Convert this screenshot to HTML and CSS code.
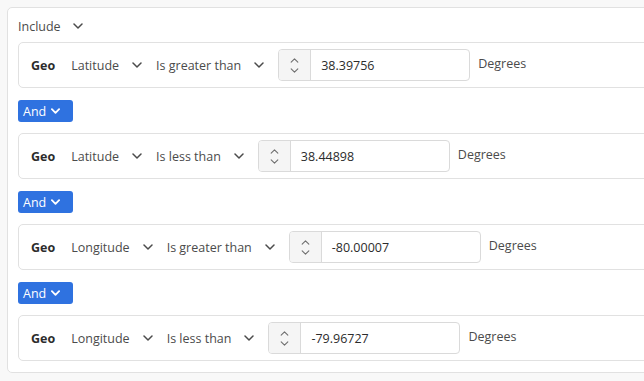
FILE: index.html
```html
<!DOCTYPE html>
<html lang="en">
<head>
    <meta charset="UTF-8">
    <meta name="viewport" content="width=device-width, initial-scale=1.0">
    <title>Geo Filter</title>
    <link rel="stylesheet" href="styles.css">
</head>
<body>
    <div class="panel">
        <div class="include">
            <span>Include</span>
            <svg class="chev" viewBox="0 0 10 6"><path d="M1 1l4 4 4-4"/></svg>
        </div>

        <div class="rule">
            <span class="geo">Geo</span>
            <span class="dd">Latitude <svg class="chev" viewBox="0 0 10 6"><path d="M1 1l4 4 4-4"/></svg></span>
            <span class="dd">Is greater than <svg class="chev" viewBox="0 0 10 6"><path d="M1 1l4 4 4-4"/></svg></span>
            <div class="num">
                <div class="step">
                    <svg viewBox="0 0 10 6"><path d="M1 5l4-4 4 4"/></svg>
                    <svg viewBox="0 0 10 6"><path d="M1 1l4 4 4-4"/></svg>
                </div>
                <span class="val">38.39756</span>
            </div>
            <span class="unit">Degrees</span>
        </div>

        <button class="and">And <svg viewBox="0 0 10 6"><path d="M1 1l4 4 4-4"/></svg></button>

        <div class="rule">
            <span class="geo">Geo</span>
            <span class="dd">Latitude <svg class="chev" viewBox="0 0 10 6"><path d="M1 1l4 4 4-4"/></svg></span>
            <span class="dd">Is less than <svg class="chev" viewBox="0 0 10 6"><path d="M1 1l4 4 4-4"/></svg></span>
            <div class="num">
                <div class="step">
                    <svg viewBox="0 0 10 6"><path d="M1 5l4-4 4 4"/></svg>
                    <svg viewBox="0 0 10 6"><path d="M1 1l4 4 4-4"/></svg>
                </div>
                <span class="val">38.44898</span>
            </div>
            <span class="unit">Degrees</span>
        </div>

        <button class="and">And <svg viewBox="0 0 10 6"><path d="M1 1l4 4 4-4"/></svg></button>

        <div class="rule">
            <span class="geo">Geo</span>
            <span class="dd">Longitude <svg class="chev" viewBox="0 0 10 6"><path d="M1 1l4 4 4-4"/></svg></span>
            <span class="dd">Is greater than <svg class="chev" viewBox="0 0 10 6"><path d="M1 1l4 4 4-4"/></svg></span>
            <div class="num">
                <div class="step">
                    <svg viewBox="0 0 10 6"><path d="M1 5l4-4 4 4"/></svg>
                    <svg viewBox="0 0 10 6"><path d="M1 1l4 4 4-4"/></svg>
                </div>
                <span class="val">-80.00007</span>
            </div>
            <span class="unit">Degrees</span>
        </div>

        <button class="and">And <svg viewBox="0 0 10 6"><path d="M1 1l4 4 4-4"/></svg></button>

        <div class="rule">
            <span class="geo">Geo</span>
            <span class="dd">Longitude <svg class="chev" viewBox="0 0 10 6"><path d="M1 1l4 4 4-4"/></svg></span>
            <span class="dd">Is less than <svg class="chev" viewBox="0 0 10 6"><path d="M1 1l4 4 4-4"/></svg></span>
            <div class="num">
                <div class="step">
                    <svg viewBox="0 0 10 6"><path d="M1 5l4-4 4 4"/></svg>
                    <svg viewBox="0 0 10 6"><path d="M1 1l4 4 4-4"/></svg>
                </div>
                <span class="val">-79.96727</span>
            </div>
            <span class="unit">Degrees</span>
        </div>
    </div>
</body>
</html>
```

FILE: styles.css
```css
* {
    margin: 0;
    padding: 0;
    box-sizing: border-box;
    font-family: 'Open Sans', 'Noto Sans', sans-serif;
}

body {
    background-color: #f8f8f8;
    overflow: hidden;
    color: #4b4b4b;
    font-size: 12.5px;
}

.panel {
    margin: 7px 0 0 7px;
    width: 660px;
    height: 366px;
    background-color: #fff;
    border: 1px solid #e1e1e1;
    border-radius: 5px;
    padding: 8px 0 0 10px;
}

.include {
    display: flex;
    align-items: center;
    gap: 12px;
    height: 20px;
    margin-bottom: 6px;
}

svg {
    fill: none;
    stroke: currentColor;
    stroke-width: 1.5;
    stroke-linecap: round;
    stroke-linejoin: round;
}

.chev {
    width: 10px;
    height: 6px;
}

.rule {
    display: flex;
    align-items: center;
    height: 46px;
    border: 1px solid #e1e1e1;
    border-radius: 5px;
    padding-left: 12px;
}

.geo {
    font-weight: 700;
    color: #2c2c2c;
    margin-right: 16px;
}

.dd {
    display: flex;
    align-items: center;
    gap: 13px;
    margin-right: 14px;
}

.num {
    display: flex;
    width: 192px;
    height: 32px;
    border: 1px solid #dadada;
    border-radius: 4px;
    overflow: hidden;
}

.step {
    width: 32px;
    background-color: #f5f5f5;
    border-right: 1px solid #dadada;
    display: flex;
    flex-direction: column;
    align-items: center;
    justify-content: center;
    gap: 5px;
    color: #6e6e6e;
}

.step svg {
    width: 9px;
    height: 5px;
    stroke-width: 1.3;
}

.val {
    display: flex;
    align-items: center;
    padding-left: 10px;
    color: #2c2c2c;
}

.unit {
    margin-left: 8px;
    margin-top: -4px;
}

.and {
    display: flex;
    align-items: center;
    gap: 5px;
    height: 22px;
    width: 55px;
    padding-left: 5px;
    margin: 12px 0 11px;
    background-color: #2f72e0;
    color: #fff;
    border: none;
    border-radius: 3px;
    font-size: 12.5px;
}

.and svg {
    width: 9px;
    height: 6px;
    stroke-width: 2;
}
```
